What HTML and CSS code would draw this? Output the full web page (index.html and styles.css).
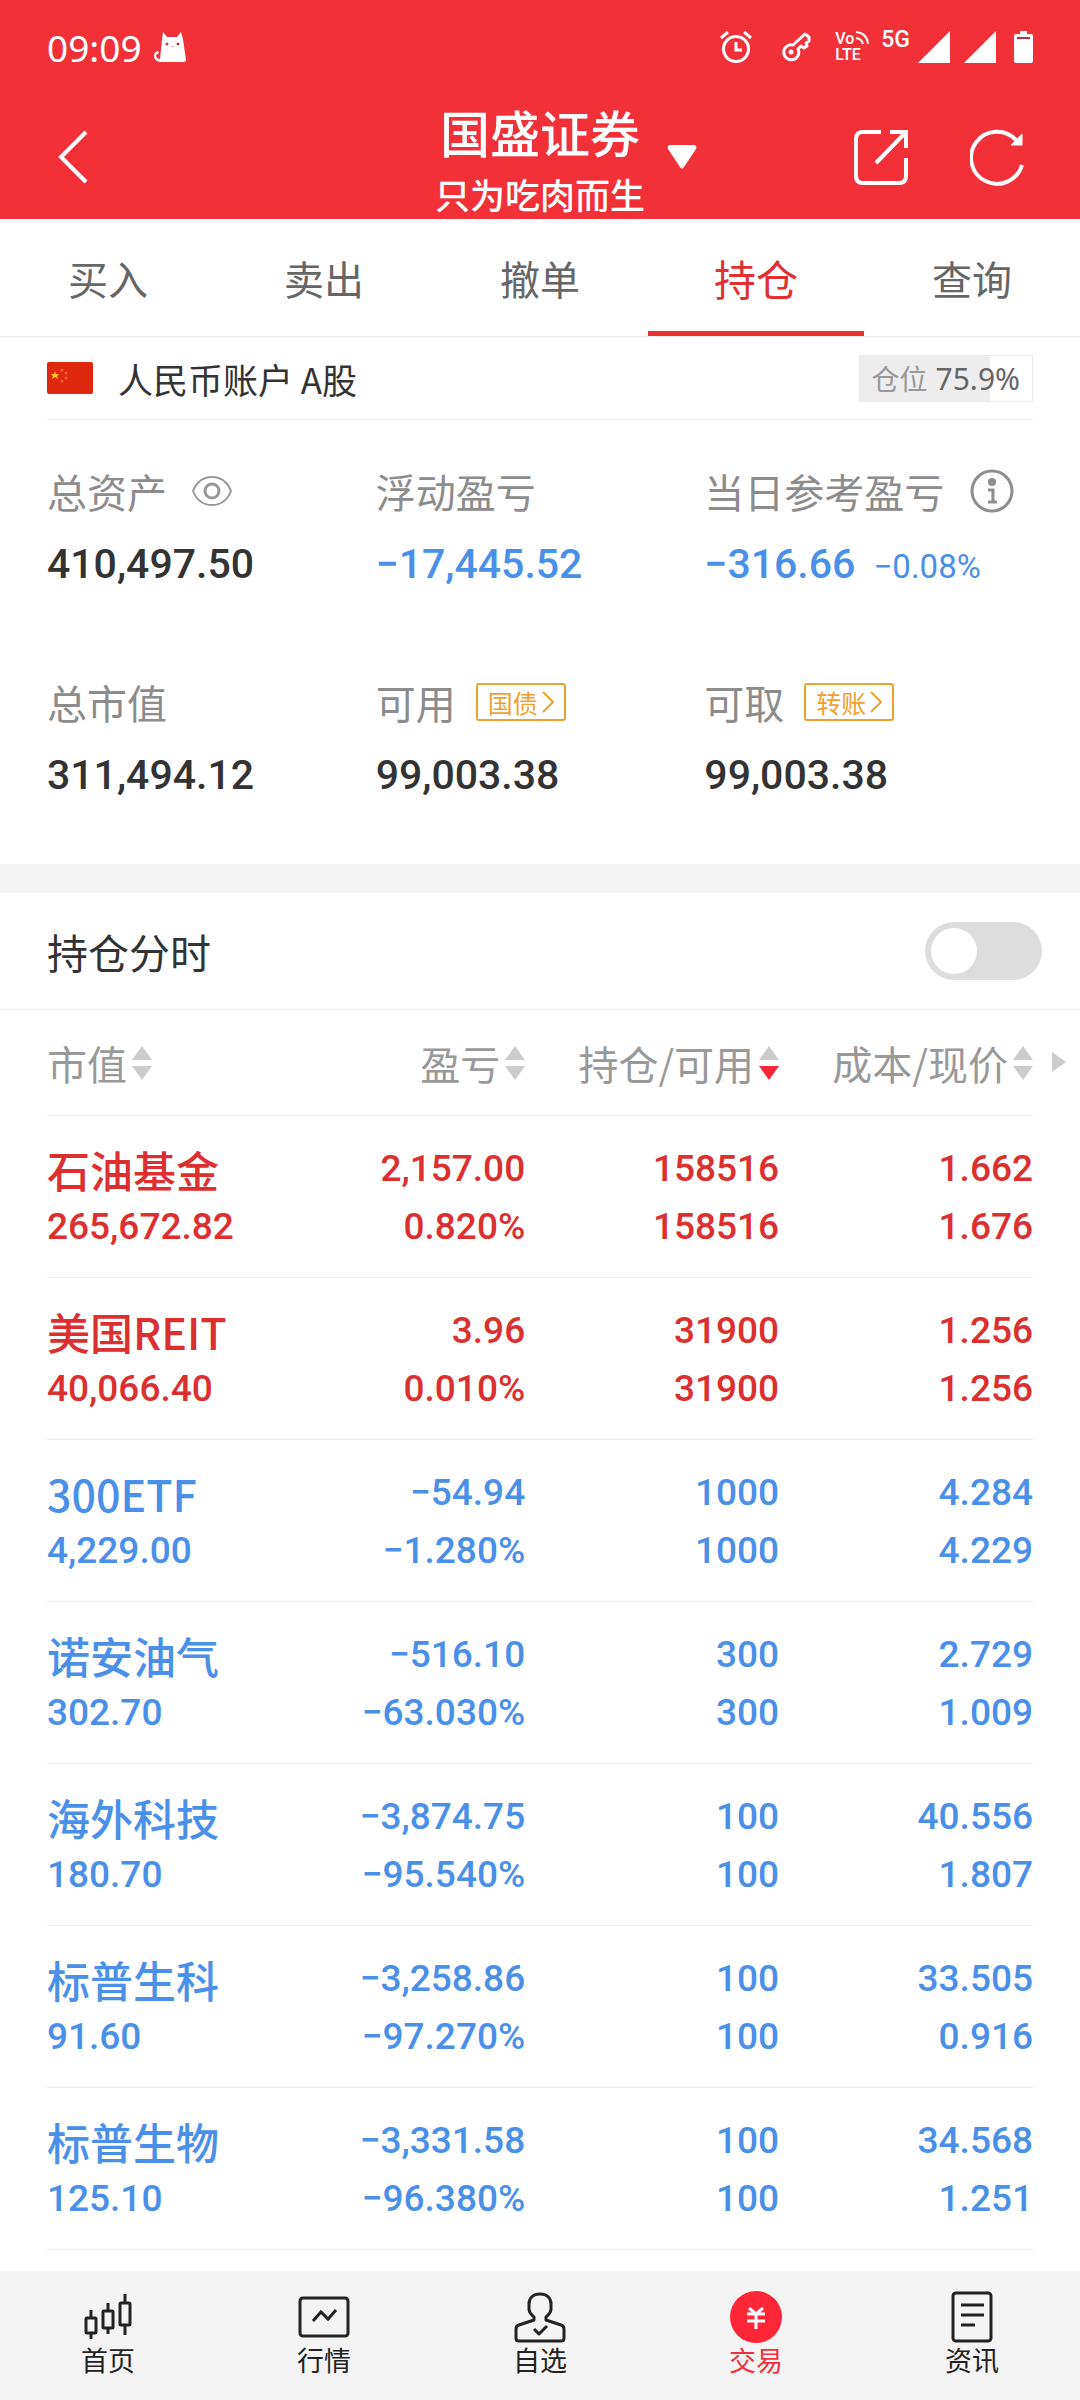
FILE: index.html
```html
<!DOCTYPE html>
<html lang="zh-CN">
  <head>
    <meta charset="UTF-8" />
    <meta name="viewport" content="width=device-width, initial-scale=1.0" />
    <title>国盛证券 - 持仓</title>
    <link rel="stylesheet" href="styles.css">
  </head>
  <body>
    <header class="top">
      <div class="status-bar">
        <span class="time">09:09</span>
        <svg class="cat" width="32" height="32" viewBox="0 0 32 32">
          <path d="M9 1 L13 6 H23 L27 1 L29 8 L32 29 Q32 31 29 31 H6 Q0 30 0 25 Q0 21 4 20 L5 22 Q2 23 2 25 Q3 28 6 28 L8 9 Z" fill="#fff" />
          <circle cx="13" cy="13" r="1.500" fill="#b04048" />
          <circle cx="24" cy="13" r="1.500" fill="#b04048" />
          <path d="M17.500 15.500 h2" stroke="#e88" />
        </svg>
        <div class="status-icons">
          <svg class="clock" width="32" height="32" viewBox="0 0 32 32" fill="none" stroke="#fff" stroke-width="3">
            <circle cx="16" cy="18" r="12.500" />
            <path d="M16 11 V19 H22 M1 7 L8 1 M24 1 L31 7" />
          </svg>
          <svg class="key" width="30" height="30" viewBox="0 0 30 30" fill="none" stroke="#fff" stroke-width="3" stroke-linejoin="round">
            <path d="M12 13 L24 2 L28 5 V9 L25 11 L26 14 L23 16 L20 14 L17 17 A7.500 7.500 0 1 1 12 13 Z" />
            <circle cx="10" cy="20" r="2.500" fill="#fff" stroke="none" />
          </svg>
          <div class="volte">
            <span>Vo</span>
            <svg width="14" height="14" viewBox="0 0 14 14" fill="none" stroke="#fff" stroke-width="2">
              <path d="M1 1 Q12 2 13 13 M1 7 Q7 8 8 13" />
            </svg>
            <span>LTE</span>
          </div>
          <span class="net">5G</span>
          <svg class="signal" width="32" height="32" viewBox="0 0 32 32"><path d="M32 0 V32 H0 Z" fill="#fff" /></svg>
          <svg class="signal" width="32" height="32" viewBox="0 0 32 32"><path d="M32 0 V32 H0 Z" fill="#fff" /></svg>
          <svg width="19" height="32" viewBox="0 0 19 32">
            <path d="M6 0 H13 V3 H17 Q19 3 19 5 V30 Q19 32 17 32 H2 Q0 32 0 30 V5 Q0 3 2 3 H6 Z" fill="#fff" />
            <path d="M3 7 H16" stroke="#c0303a" stroke-width="2" />
          </svg>
        </div>
      </div>

      <div class="title-bar">
        <button type="button" class="icon-btn back" aria-label="返回">
          <svg width="30" height="54" viewBox="0 0 30 54" fill="none" stroke="#fff" stroke-width="4">
            <path d="M28 2 L3 27 L28 52" />
          </svg>
        </button>
        <button type="button" class="broker">
          <span class="broker-name">国盛证券</span>
          <span class="broker-user">只为吃肉而生</span>
          <svg class="caret" width="30" height="24" viewBox="0 0 30 24">
            <path d="M2 0 H28 Q30 1 29 4 L17 22 Q15 25 13 22 L1 4 Q0 1 2 0 Z" fill="#fff" />
          </svg>
        </button>
        <div class="actions">
          <button type="button" class="icon-btn" aria-label="分享">
            <svg width="54" height="56" viewBox="0 0 54 56" fill="none" stroke="#fff" stroke-width="4">
              <path d="M27 3 H9 Q2 3 2 10 V47 Q2 54 9 54 H45 Q52 54 52 47 V29 M36 3 H52 V19 M51 4 L22 34" />
            </svg>
          </button>
          <button type="button" class="icon-btn" aria-label="刷新">
            <svg width="56" height="58" viewBox="0 0 56 58" fill="none" stroke="#fff" stroke-width="4">
              <path d="M46 12 A26 26 0 1 0 52 37" />
              <path d="M52 6 V17 H41 Z" fill="#fff" stroke-width="1" />
            </svg>
          </button>
        </div>
      </div>
    </header>

    <nav class="tabs">
      <a href="#buy">买入</a>
      <a href="#sell">卖出</a>
      <a href="#cancel">撤单</a>
      <a href="#position" class="active">持仓</a>
      <a href="#query">查询</a>
    </nav>

    <main>
      <div class="account">
        <svg width="46" height="32" viewBox="0 0 46 32">
          <rect width="46" height="32" rx="2" fill="#de2910" />
          <path d="M8 9 L9 12 H12 L10 14 L11 17 L8 15 L5 17 L6 14 L4 12 H7 Z" fill="#ffc621" />
          <g fill="#f0662a">
            <circle cx="15" cy="8" r="1.500" />
            <circle cx="19" cy="11" r="1.500" />
            <circle cx="19" cy="16" r="1.500" />
            <circle cx="15" cy="19" r="1.500" />
          </g>
        </svg>
        <span class="account-name">人民币账户 A股</span>
        <div class="ratio">
          <div class="ratio-fill" style="width: 75.9%"></div>
          <span class="ratio-label">仓位</span>
          <span class="ratio-value">75.9%</span>
        </div>
      </div>

      <section class="summary">
        <div class="item">
          <div class="label">总资产
            <button type="button" class="icon-btn eye" aria-label="隐藏金额">
              <svg width="42" height="32" viewBox="0 0 42 32" fill="none" stroke="#999" stroke-width="2">
                <path d="M2 16 C6 6 13 2 21 2 C29 2 36 6 40 16 C36 26 29 30 21 30 C13 30 6 26 2 16 Z" />
                <circle cx="21" cy="16" r="7" stroke-width="3" />
              </svg>
            </button>
          </div>
          <div class="value">410,497.50</div>
        </div>
        <div class="item">
          <div class="label">浮动盈亏</div>
          <div class="value down">−17,445.52</div>
        </div>
        <div class="item">
          <div class="label">当日参考盈亏
            <button type="button" class="icon-btn info" aria-label="说明">
              <svg width="44" height="44" viewBox="0 0 44 44" fill="none" stroke="#8f8f8f">
                <circle cx="22" cy="22" r="20" stroke-width="3" />
                <circle cx="22" cy="13" r="4" fill="#8f8f8f" stroke="none" />
                <path d="M18 21 H23 V33 M18 33 H27" stroke-width="3" />
              </svg>
            </button>
          </div>
          <div class="value down">−316.66 <small>−0.08%</small></div>
        </div>
        <div class="item">
          <div class="label">总市值</div>
          <div class="value">311,494.12</div>
        </div>
        <div class="item">
          <div class="label">可用
            <a href="#bond" class="tag">国债<svg width="12" height="22" viewBox="0 0 12 22" fill="none" stroke="#f0a030" stroke-width="2"><path d="M1 1 L11 11 L1 21" /></svg></a>
          </div>
          <div class="value">99,003.38</div>
        </div>
        <div class="item">
          <div class="label">可取
            <a href="#transfer" class="tag">转账<svg width="12" height="22" viewBox="0 0 12 22" fill="none" stroke="#f0a030" stroke-width="2"><path d="M1 1 L11 11 L1 21" /></svg></a>
          </div>
          <div class="value">99,003.38</div>
        </div>
      </section>

      <div class="chart-row">
        <label for="chart">持仓分时</label>
        <input type="checkbox" id="chart" class="switch" />
      </div>

      <table class="positions">
        <thead>
          <tr>
            <th><button type="button" class="sort">市值<svg width="20" height="34" viewBox="0 0 20 34"><path class="up" d="M10 0 L20 14 H0 Z" /><path class="dn" d="M0 20 H20 L10 34 Z" /></svg></button></th>
            <th><button type="button" class="sort">盈亏<svg width="20" height="34" viewBox="0 0 20 34"><path class="up" d="M10 0 L20 14 H0 Z" /><path class="dn" d="M0 20 H20 L10 34 Z" /></svg></button></th>
            <th><button type="button" class="sort desc">持仓/可用<svg width="20" height="34" viewBox="0 0 20 34"><path class="up" d="M10 0 L20 14 H0 Z" /><path class="dn" d="M0 20 H20 L10 34 Z" /></svg></button></th>
            <th><button type="button" class="sort">成本/现价<svg width="20" height="34" viewBox="0 0 20 34"><path class="up" d="M10 0 L20 14 H0 Z" /><path class="dn" d="M0 20 H20 L10 34 Z" /></svg></button><svg class="more" width="14" height="20" viewBox="0 0 14 20"><path d="M0 0 L14 10 L0 20 Z" fill="#ccc" /></svg></th>
          </tr>
        </thead>
        <tbody>
          <tr class="up-row">
            <td><span class="name">石油基金</span><span>265,672.82</span></td>
            <td><span>2,157.00</span><span>0.820%</span></td>
            <td><span>158516</span><span>158516</span></td>
            <td><span>1.662</span><span>1.676</span></td>
          </tr>
          <tr class="up-row">
            <td><span class="name">美国REIT</span><span>40,066.40</span></td>
            <td><span>3.96</span><span>0.010%</span></td>
            <td><span>31900</span><span>31900</span></td>
            <td><span>1.256</span><span>1.256</span></td>
          </tr>
          <tr>
            <td><span class="name">300ETF</span><span>4,229.00</span></td>
            <td><span>−54.94</span><span>−1.280%</span></td>
            <td><span>1000</span><span>1000</span></td>
            <td><span>4.284</span><span>4.229</span></td>
          </tr>
          <tr>
            <td><span class="name">诺安油气</span><span>302.70</span></td>
            <td><span>−516.10</span><span>−63.030%</span></td>
            <td><span>300</span><span>300</span></td>
            <td><span>2.729</span><span>1.009</span></td>
          </tr>
          <tr>
            <td><span class="name">海外科技</span><span>180.70</span></td>
            <td><span>−3,874.75</span><span>−95.540%</span></td>
            <td><span>100</span><span>100</span></td>
            <td><span>40.556</span><span>1.807</span></td>
          </tr>
          <tr>
            <td><span class="name">标普生科</span><span>91.60</span></td>
            <td><span>−3,258.86</span><span>−97.270%</span></td>
            <td><span>100</span><span>100</span></td>
            <td><span>33.505</span><span>0.916</span></td>
          </tr>
          <tr>
            <td><span class="name">标普生物</span><span>125.10</span></td>
            <td><span>−3,331.58</span><span>−96.380%</span></td>
            <td><span>100</span><span>100</span></td>
            <td><span>34.568</span><span>1.251</span></td>
          </tr>
        </tbody>
      </table>
    </main>

    <nav class="bottom-nav">
      <a href="#home">
        <svg width="52" height="52" viewBox="0 0 52 52" fill="none" stroke="#222" stroke-width="3">
          <rect x="4" y="27" width="10" height="15" rx="1" />
          <rect x="21" y="20" width="10" height="17" rx="1" />
          <rect x="38" y="12" width="10" height="22" rx="1" />
          <path d="M9 19 V27 M9 42 V48 M26 12 V20 M26 37 V43 M43 3 V12 M43 34 V44" />
        </svg>
        首页
      </a>
      <a href="#market">
        <svg width="52" height="52" viewBox="0 0 52 52" fill="none" stroke="#222" stroke-width="3">
          <rect x="2" y="7" width="48" height="38" rx="3" />
          <path d="M15 30 L23 21 L30 28 L38 19" />
        </svg>
        行情
      </a>
      <a href="#watchlist">
        <svg width="52" height="52" viewBox="0 0 52 52" fill="none" stroke="#222" stroke-width="3" stroke-linejoin="round">
          <path d="M26 3 C19 3 15 7 15 13 V18 C15 22 17 23 20 26 V29 L5 34 Q2 35 2 38 V47 Q2 50 5 50 H47 Q50 50 50 47 V38 Q50 35 47 34 L32 29 V26 C35 23 37 22 37 18 V13 C37 7 33 3 26 3 Z" />
          <path d="M20 38 L25 43 L33 35" />
        </svg>
        自选
      </a>
      <a href="#trade" class="active">
        <svg width="52" height="52" viewBox="0 0 52 52" fill="none" stroke="#fff" stroke-width="3">
          <circle cx="26" cy="26" r="26" fill="#ff2638" stroke="none" />
          <path d="M19 17 L26 23 L33 17 M17 23 H35 M17 30 H35 M26 22 V38" />
        </svg>
        交易
      </a>
      <a href="#news">
        <svg width="52" height="52" viewBox="0 0 52 52" fill="none" stroke="#222" stroke-width="3">
          <rect x="7" y="2" width="38" height="48" rx="3" />
          <path d="M15 14 H38 M15 24 H38 M15 34 H29" />
        </svg>
        资讯
      </a>
    </nav>
  </body>
</html>
```
FILE: styles.css
```css
* {
  box-sizing: border-box;
}

body {
  margin: 0;
  min-height: 100vh;
  display: flex;
  flex-direction: column;
  background-color: #fff;
  color: #333;
  font-family: "Noto Sans CJK SC", sans-serif;
}

a {
  color: inherit;
  text-decoration: none;
}

button {
  margin: 0;
  padding: 0;
  border: none;
  background: none;
  color: inherit;
  font: inherit;
  cursor: pointer;
}

svg {
  display: block;
  flex-shrink: 0;
}

/* header */
.top {
  background-color: #f13038;
  color: #fff;
}

.status-bar {
  display: flex;
  align-items: center;
  height: 94px;
  padding: 0 47px;
}

.time {
  font: 37px "Noto Sans", sans-serif;
}

.cat {
  margin-left: 12px;
}

.status-icons {
  display: flex;
  align-items: center;
  margin-left: auto;
}

.key {
  margin: 0 24px 0 29px;
}

.volte {
  display: grid;
  grid-template-columns: 20px 14px;
  font: 500 16px/16px Roboto, sans-serif;
}

.net {
  align-self: flex-start;
  margin: 0 8px 0 12px;
  font: 500 23px/18px Roboto, sans-serif;
}

.signal {
  margin-right: 14px;
}

.signal + svg:last-child {
  margin-left: 4px;
}

.title-bar {
  display: grid;
  grid-template-columns: 1fr auto 1fr;
  align-items: center;
  height: 125px;
  padding: 0 54px;
}

.icon-btn {
  display: block;
}

.back {
  justify-self: start;
  margin-left: 4px;
}

.broker {
  position: relative;
  display: flex;
  flex-direction: column;
  align-items: center;
  font-weight: 500;
}

.broker-name {
  font-size: 50px;
  line-height: 75px;
}

.broker-user {
  font-size: 35px;
  line-height: 50px;
}

.caret {
  position: absolute;
  left: 100%;
  top: 50%;
  margin: -12px 0 0 22px;
}

.actions {
  display: flex;
  align-items: center;
  gap: 62px;
  justify-self: end;
}

/* tabs */
.tabs {
  display: flex;
  height: 118px;
  border-bottom: 1px solid #ebebeb;
}

.tabs a {
  flex: 1;
  display: flex;
  align-items: center;
  justify-content: center;
  padding-top: 5px;
  border-bottom: 5px solid transparent;
  color: #666;
  font-size: 40px;
}

.tabs .active {
  border-color: #e63232;
  color: #e03030;
  font-size: 42px;
}

/* account */
.account {
  display: flex;
  align-items: center;
  height: 83px;
  margin: 0 47px;
  border-bottom: 1px solid #ebebeb;
}

.account-name {
  margin-left: 25px;
  font-size: 35px;
}

.ratio {
  position: relative;
  display: flex;
  align-items: center;
  gap: 8px;
  height: 47px;
  margin-left: auto;
  padding: 0 12px;
  border: 1px solid #ebebeb;
}

.ratio-fill {
  position: absolute;
  top: 0;
  bottom: 0;
  left: 0;
  background-color: #ededed;
}

.ratio-label {
  position: relative;
  color: #999;
  font-size: 28px;
}

.ratio-value {
  position: relative;
  color: #666;
  font: 30px "Noto Sans", sans-serif;
}

/* assets */
.summary {
  display: grid;
  grid-template-columns: repeat(3, 1fr);
  row-gap: 65px;
  padding: 41px 47px 46px;
  border-bottom: 29px solid #f4f4f4;
}

.label {
  display: flex;
  align-items: center;
  height: 60px;
  color: #8c8c8c;
  font-size: 40px;
  white-space: nowrap;
}

.eye {
  margin-left: 24px;
}

.info {
  margin-left: 26px;
}

.tag {
  display: flex;
  align-items: center;
  gap: 4px;
  height: 38px;
  margin-left: 20px;
  padding: 0 10px;
  border: 2px solid #f0a030;
  border-radius: 3px;
  color: #f0a030;
  font-size: 25px;
}

.value {
  height: 86px;
  font: 500 41px/86px Roboto, sans-serif;
  white-space: nowrap;
}

.value small {
  margin-left: 8px;
  font-size: 33px;
  font-weight: 400;
}

.down {
  color: #4a90e8;
}

/* intraday switch */
.chart-row {
  display: flex;
  align-items: center;
  justify-content: space-between;
  height: 117px;
  padding: 0 38px 0 47px;
  border-bottom: 1px solid #ebebeb;
  font-size: 41px;
}

.switch {
  appearance: none;
  width: 117px;
  height: 58px;
  margin: 0;
  padding: 6px;
  border-radius: 29px;
  background-color: #ddd;
}

.switch::before {
  content: "";
  display: block;
  width: 46px;
  height: 46px;
  border-radius: 50%;
  background-color: #fff;
}

.switch:checked {
  background-color: #e63232;
}

.switch:checked::before {
  margin-left: auto;
}

/* positions */
.positions {
  width: calc(100% - 94px);
  margin: 0 47px 21px;
  border-collapse: separate;
  border-spacing: 0;
  table-layout: fixed;
}

.positions th,
.positions td {
  padding: 0;
  border-bottom: 1px solid #ebebeb;
  text-align: right;
  white-space: nowrap;
}

.positions th {
  position: relative;
  height: 106px;
  padding-bottom: 6px;
  color: #999;
  font-size: 40px;
  font-weight: 400;
}

.positions th:first-child,
.positions td:first-child {
  width: 23%;
  text-align: left;
}

.positions th:nth-child(2) {
  width: 25.5%;
}

.sort {
  display: inline-flex;
  align-items: center;
  gap: 5px;
  vertical-align: middle;
}

.sort path {
  fill: #ccc;
}

.sort.desc .dn {
  fill: #ff2638;
}

.more {
  position: absolute;
  left: 100%;
  top: 42px;
  margin-left: 19px;
}

.positions td {
  padding: 24px 0 21px;
  color: #4a90e8;
  font: 500 37px/58px Roboto, sans-serif;
}

.positions td span {
  display: block;
}

.positions td .name {
  height: 58px;
  font: 500 43px/58px "Noto Sans CJK SC", sans-serif;
}

.positions .up-row td {
  color: #dc3030;
}

/* bottom nav */
.bottom-nav {
  display: flex;
  height: 129px;
  margin-top: auto;
  background-color: #f4f4f4;
}

.bottom-nav a {
  flex: 1;
  display: flex;
  flex-direction: column;
  align-items: center;
  padding-top: 20px;
  color: #222;
  font-size: 27px;
  line-height: 34px;
}

.bottom-nav .active {
  color: #f0303c;
}
```
